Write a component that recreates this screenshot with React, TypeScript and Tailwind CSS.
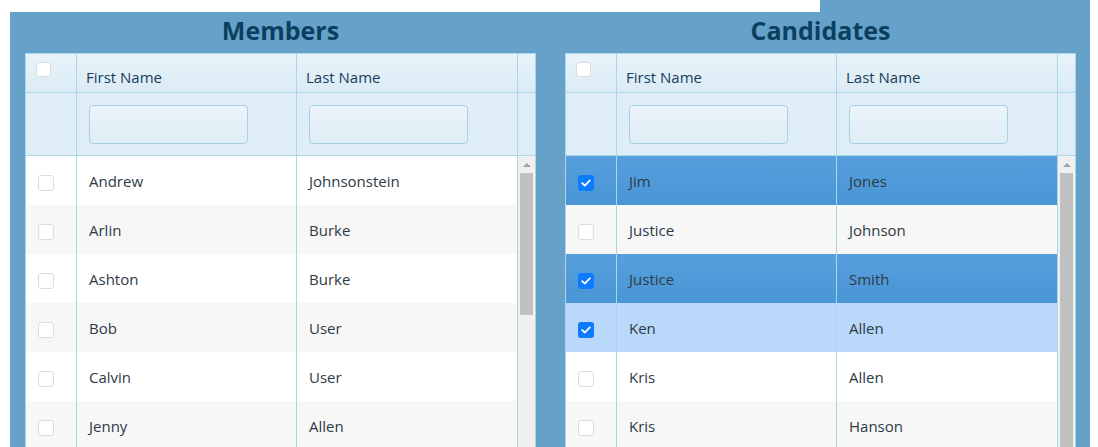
import React from "react";

type Person = {
  first: string;
  last: string;
  checked?: boolean;
  state?: "selected" | "focus";
};

const members: Person[] = [
  { first: "Andrew", last: "Johnsonstein" },
  { first: "Arlin", last: "Burke" },
  { first: "Ashton", last: "Burke" },
  { first: "Bob", last: "User" },
  { first: "Calvin", last: "User" },
  { first: "Jenny", last: "Allen" },
];

const candidates: Person[] = [
  { first: "Jim", last: "Jones", checked: true, state: "selected" },
  { first: "Justice", last: "Johnson" },
  { first: "Justice", last: "Smith", checked: true, state: "selected" },
  { first: "Ken", last: "Allen", checked: true, state: "focus" },
  { first: "Kris", last: "Allen" },
  { first: "Kris", last: "Hanson" },
];

function CheckBox({ checked, small }: { checked?: boolean; small?: boolean }) {
  const size = small ? "w-[15px] h-[15px]" : "w-[16px] h-[16px]";
  if (checked) {
    return (
      <div className={`${size} rounded-[3px] bg-[#0b7bff] flex items-center justify-center`}>
        <svg width="10" height="8" viewBox="0 0 10 8" fill="none">
          <path d="M1.2 4.2 L3.8 6.6 L8.8 1.4" stroke="white" strokeWidth="1.8" strokeLinecap="round" strokeLinejoin="round" />
        </svg>
      </div>
    );
  }
  return <div className={`${size} rounded-[3px] bg-white border border-[#dcdcdc]`} />;
}

function Row({ p, index }: { p: Person; index: number }) {
  let bg = index % 2 === 0 ? "bg-white" : "bg-[#f7f7f7]";
  if (p.state === "selected") bg = "bg-gradient-to-b from-[#579fdd] to-[#4995d5]";
  if (p.state === "focus") bg = "bg-[#b9d8fa]";
  return (
    <div className={`flex h-[49px] text-[15px] text-[#2e3a44] ${bg}`}>
      <div className="w-[51px] border-r border-[#a9d6e9] pl-[12px] pt-[19px]">
        <CheckBox checked={p.checked} />
      </div>
      <div className="w-[220px] border-r border-[#a9d6e9] pl-[12px] pt-[2px] flex items-center">{p.first}</div>
      <div className="w-[221px] border-r border-[#a9d6e9] pl-[12px] pt-[2px] flex items-center">{p.last}</div>
    </div>
  );
}

function ScrollBar({ thumb }: { thumb: string }) {
  return (
    <div className="w-[17px] bg-[#f0f0f0] flex flex-col items-center pt-[7px]">
      <div className="w-0 h-0 border-l-[4px] border-r-[4px] border-b-[4px] border-l-transparent border-r-transparent border-b-[#a3a3a3]" />
      <div className={`mt-[6px] w-[13px] bg-[#c1c1c1] ${thumb}`} />
    </div>
  );
}

function Panel({ title, rows, thumb }: { title: string; rows: Person[]; thumb: string }) {
  return (
    <div className="w-[511px] flex flex-col">
      <div className="h-[41px] flex items-center justify-center pb-[4px] text-[25px] font-bold text-[#0b3f5f]">
        {title}
      </div>
      <div className="border border-[#a9d6e9] bg-white">
        <div className="flex h-[39px] border-b border-[#a9d6e9] bg-gradient-to-b from-[#e8f3f9] to-[#dbebf5] text-[15px] text-[#173d5c]">
          <div className="w-[51px] border-r border-[#a9d6e9] pl-[10px] pt-[8px]">
            <CheckBox small />
          </div>
          <div className="w-[220px] border-r border-[#a9d6e9] pl-[9px] pt-[13px] leading-[20px]">First Name</div>
          <div className="w-[221px] border-r border-[#a9d6e9] pl-[9px] pt-[13px] leading-[20px]">Last Name</div>
          <div className="w-[17px]" />
        </div>
        <div className="flex h-[63px] border-b border-[#a9d6e9] bg-[#deedf6]">
          <div className="w-[51px] border-r border-[#a9d6e9]" />
          <div className="w-[220px] border-r border-[#a9d6e9] pl-[12px] pt-[12px]">
            <div className="w-[159px] h-[39px] rounded-[4px] border border-[#a6d0e5] bg-gradient-to-b from-[#ebf4fa] to-[#dfedf6]" />
          </div>
          <div className="w-[221px] border-r border-[#a9d6e9] pl-[12px] pt-[12px]">
            <div className="w-[159px] h-[39px] rounded-[4px] border border-[#a6d0e5] bg-gradient-to-b from-[#ebf4fa] to-[#dfedf6]" />
          </div>
          <div className="w-[17px]" />
        </div>
        <div className="flex h-[294px] overflow-hidden">
          <div className="w-[492px]">
            {rows.map((p, i) => (
              <Row key={i} p={p} index={i} />
            ))}
          </div>
          <ScrollBar thumb={thumb} />
        </div>
      </div>
    </div>
  );
}

export default function App() {
  return (
    <div className="min-h-screen bg-white font-['Open_Sans',sans-serif]">
      <div className="w-[1080px] ml-[10px] h-[12px] flex justify-end">
        <div className="w-[270px] bg-[#65a1c9]" />
      </div>
      <div className="w-[1080px] ml-[10px] bg-[#65a1c9] pl-[15px] pr-[14px] flex gap-[29px]">
        <Panel title="Members" rows={members} thumb="h-[142px]" />
        <Panel title="Candidates" rows={candidates} thumb="h-[280px]" />
      </div>
    </div>
  );
}
